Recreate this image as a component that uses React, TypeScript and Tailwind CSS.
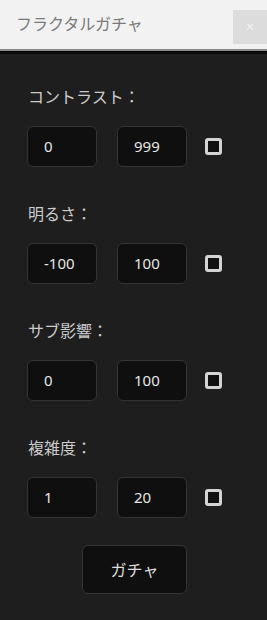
import { useState } from 'react';

const fields = [
  { id: 'contrast', label: 'コントラスト：', min: '0', max: '999' },
  { id: 'brightness', label: '明るさ：', min: '-100', max: '100' },
  { id: 'sub', label: 'サブ影響：', min: '0', max: '100' },
  { id: 'complexity', label: '複雑度：', min: '1', max: '20' },
];

const font = { fontFamily: '"Noto Sans", "Noto Sans CJK JP", sans-serif' };

export default function App() {
  const [checked, setChecked] = useState<Record<string, boolean>>({});

  return (
    <div className="w-[267px] h-[620px] flex flex-col bg-[#1e1e1e] overflow-hidden" style={font}>
      {/* タイトルバー */}
      <div className="h-[49px] bg-[#f2f2f2] flex items-start justify-between shrink-0">
        <span className="pl-4 pt-[12px] text-[16px] leading-[24px] text-[#7a7a7a]">フラクタルガチャ</span>
        <button className="mt-[10px] w-[34px] h-[34px] bg-[#dcdcdc] text-[#f4f4f4] text-[14px] leading-none flex items-center justify-center">
          ×
        </button>
      </div>
      <div className="h-[2px] bg-[#8a8a8a] shrink-0" />
      <div className="h-[3px] bg-[#0a0a0a] shrink-0" />

      <div className="flex flex-col pl-[27px] pt-[31px]">
        <div className="flex flex-col gap-[35px]">
          {fields.map((f) => (
            <div key={f.id} className="flex flex-col">
              <span className="text-[16px] leading-[24px] text-[#cccccc] pl-[1px]">{f.label}</span>
              <div className="flex items-center mt-[17px]">
                <div className="w-[70px] h-[41px] rounded-[6px] border border-[#343434] bg-[#0f0f0f] flex items-center pl-[16px] text-[15px] text-[#e6e6e6]">
                  {f.min}
                </div>
                <div className="ml-[20px] w-[70px] h-[41px] rounded-[6px] border border-[#343434] bg-[#0f0f0f] flex items-center pl-[16px] text-[15px] text-[#e6e6e6]">
                  {f.max}
                </div>
                <button
                  onClick={() => setChecked((c) => ({ ...c, [f.id]: !c[f.id] }))}
                  className="ml-[18px] w-[17px] h-[17px] rounded-[3px] border-[3px] border-[#d4d4d4] bg-[#111111]"
                />
              </div>
            </div>
          ))}
        </div>

        <button className="self-start ml-[55px] mt-[27px] w-[105px] h-[49px] rounded-[6px] border border-[#343434] bg-[#0f0f0f] text-[16px] text-[#dcdcdc]">
          ガチャ
        </button>
      </div>
    </div>
  );
}
